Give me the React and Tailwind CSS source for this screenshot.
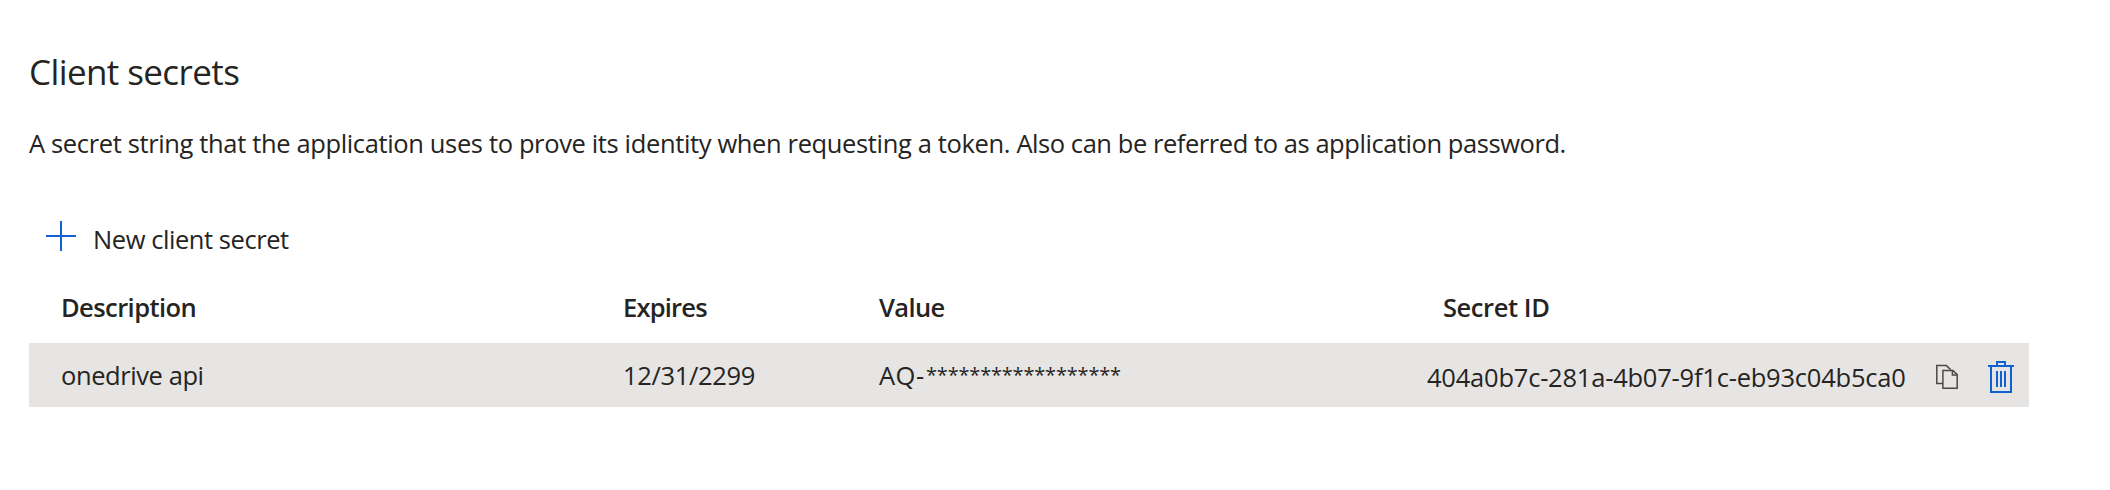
const secrets = [
  {
    description: "onedrive api",
    expires: "12/31/2299",
    valuePrefix: "AQ-",
    valueMask: "******************",
    id: "404a0b7c-281a-4b07-9f1c-eb93c04b5ca0",
  },
];

function PlusIcon() {
  return (
    <svg width="30" height="30" viewBox="0 0 30 30" className="shrink-0" fill="none" stroke="#0f62cf" strokeWidth="2">
      <path d="M15 0V30M0 15H30" />
    </svg>
  );
}

function CopyIcon() {
  return (
    <svg width="24" height="26" viewBox="0 0 24 26" fill="none" stroke="#4c4a48" strokeWidth="1.5">
      <path d="M6.8 19.5H0.8V1.6H10.4L14.8 5.8" />
      <path d="M6.9 6.4H17L21.2 10.6V24.3H6.9Z" />
      <path d="M16.4 6.4V11H21.2" />
    </svg>
  );
}

function TrashIcon() {
  return (
    <svg width="26" height="32" viewBox="0 0 26 32" fill="none" stroke="#0f62cf" strokeWidth="2">
      <path d="M0 5H26M9 5V1H17V5" />
      <path d="M3 5V31H23V5" />
      <path d="M9 10V26M13 10V26M17 10V26" />
    </svg>
  );
}

export default function App() {
  return (
    <main className="h-[490px] bg-white pl-[29px] pt-[51px] font-['Open_Sans',sans-serif] text-[25.5px] leading-[36px] text-[#252423]">
      <h2 className="text-[35px] leading-[42px] tracking-[-0.6px]">Client secrets</h2>
      <p className="mt-[32px]">
        <span className="tracking-[-0.36px]">A secret string that the application uses to prove its identity when requesting a token. </span>
        <span className="tracking-[-0.44px]">Also can be referred to as application password.</span>
      </p>

      <button className="mt-[60px] flex h-[36px] items-start gap-[17px] pl-[17px] tracking-[-0.44px]">
        <PlusIcon />
        <span>New client secret</span>
      </button>

      <section className="mt-[32px] w-[2000px]">
        <div className="grid h-[54px] grid-cols-[562px_256px_564px_1fr] pl-[32px] font-semibold">
          <span className="tracking-[-0.57px]">Description</span>
          <span className="tracking-[-0.8px]">Expires</span>
          <span className="tracking-[-0.6px]">Value</span>
          <span className="tracking-[-0.42px]">Secret ID</span>
        </div>
        {secrets.map((secret) => (
          <div key={secret.id} className="grid h-[64px] grid-cols-[562px_256px_548px_1fr] bg-[#e6e5e4] pl-[32px] pt-[14px]">
            <span className="tracking-[-0.42px]">{secret.description}</span>
            <span className="tracking-[-0.33px]">{secret.expires}</span>
            <span className="flex">
              <span className="w-[47px] tracking-[0.5px]">{secret.valuePrefix}</span>
              <span className="text-[20px] font-medium tracking-[-0.19px]">{secret.valueMask}</span>
            </span>
            <div className="flex">
              <span className="w-[509px] pt-[2px] tracking-[-0.22px]">{secret.id}</span>
              <button className="mt-[7px] h-[26px] w-[52px]">
                <CopyIcon />
              </button>
              <button className="mt-[4px] h-[32px]">
                <TrashIcon />
              </button>
            </div>
          </div>
        ))}
      </section>
    </main>
  );
}
